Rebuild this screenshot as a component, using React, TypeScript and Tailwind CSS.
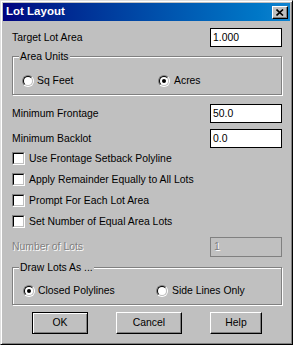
import type { ReactNode } from "react";

const face = "bg-[#c0c0c0]";

function Radio({ checked }: { checked?: boolean }) {
  return (
    <span className="flex size-[12px] shrink-0 items-center justify-center rounded-full border border-t-[#808080] border-l-[#808080] border-r-white border-b-white">
      <span className="flex size-[10px] items-center justify-center rounded-full border border-t-black border-l-black border-r-[#c0c0c0] border-b-[#c0c0c0] bg-white">
        {checked && <span className="size-[4px] rounded-full bg-black" />}
      </span>
    </span>
  );
}

function Check() {
  return (
    <span className="flex size-[13px] shrink-0 border border-t-[#808080] border-l-[#808080] border-r-white border-b-white">
      <span className="size-full border border-t-black border-l-black border-r-[#c0c0c0] border-b-[#c0c0c0] bg-white" />
    </span>
  );
}

function Field({ label, value, disabled }: { label: string; value: string; disabled?: boolean }) {
  return (
    <div className="flex h-[19px] items-center justify-between">
      <span className={disabled ? "text-[#808080] [text-shadow:1px_1px_0_#fff]" : ""}>{label}</span>
      <div
        className={
          disabled
            ? "flex h-[20px] w-[72px] items-center border border-[#808080] pl-[3px] text-[#808080] [text-shadow:1px_1px_0_#fff]"
            : "flex h-[19px] w-[72px] items-center border border-black bg-white pl-[2px]"
        }
      >
        {value}
      </div>
    </div>
  );
}

function Group({ title, className, children }: { title: string; className: string; children: ReactNode }) {
  return (
    <div className={`border border-[#808080] shadow-[1px_1px_0_#fff,inset_1px_1px_0_#fff] ${className}`}>
      <span className={`-mt-[7px] ml-[6px] block w-fit px-[1px] leading-[13px] ${face}`}>{title}</span>
      {children}
    </div>
  );
}

function CheckRow({ label }: { label: string }) {
  return (
    <div className="flex h-[21px] items-center gap-[4px]">
      <Check />
      <span>{label}</span>
    </div>
  );
}

function Button({ label, width, isDefault }: { label: string; width: string; isDefault?: boolean }) {
  return (
    <button
      className={
        isDefault
          ? `flex h-[22px] ${width} items-center justify-center border border-black shadow-[inset_1px_1px_0_#fff,inset_-1px_-1px_0_#808080] ${face}`
          : `flex h-[22px] ${width} items-center justify-center border border-t-white border-l-white border-r-black border-b-black shadow-[inset_-1px_-1px_0_#808080] ${face}`
      }
    >
      {label}
    </button>
  );
}

export default function App() {
  return (
    <div
      className={`h-[345px] w-[293px] border border-t-[#dfdfdf] border-l-[#dfdfdf] border-r-black border-b-black p-[2px] shadow-[inset_1px_1px_0_#fff,inset_-1px_-1px_0_#808080] font-['Liberation_Sans',Arial,sans-serif] text-[10.4px] text-black ${face}`}
    >
      <div className="flex h-[18px] items-center justify-between bg-gradient-to-r from-[#000080] to-[#1084d0] pl-[3px] pr-[2px]">
        <span className="text-[11.5px] font-bold text-white">Lot Layout</span>
        <span className="flex h-[13px] w-[16px] items-center justify-center border border-t-white border-l-white border-r-black border-b-black bg-[#c0c0c0] shadow-[inset_-1px_-1px_0_#808080]">
          <svg width="8" height="7" viewBox="0 0 8 7">
            <path d="M0.5 0.5 L7 6.5 M7 0.5 L0.5 6.5" stroke="black" strokeWidth="1.6" />
          </svg>
        </span>
      </div>

      <div className="flex flex-col pl-[9px] pr-[8px]">
        <div className="mt-[7px]">
          <Field label="Target Lot Area" value="1.000" />
        </div>

        <Group title="Area Units" className="mt-[9px] h-[39px]">
          <div className="mt-[9px] flex h-[18px] items-center pl-[9px]">
            <div className="flex w-[136px] items-center gap-[3px]">
              <Radio />
              <span>Sq Feet</span>
            </div>
            <div className="flex items-center gap-[4px]">
              <Radio checked />
              <span>Acres</span>
            </div>
          </div>
        </Group>

        <div className="mt-[9px]">
          <Field label="Minimum Frontage" value="50.0" />
        </div>
        <div className="mt-[6px]">
          <Field label="Minimum Backlot" value="0.0" />
        </div>

        <div className="flex flex-col">
          <CheckRow label="Use Frontage Setback Polyline" />
          <CheckRow label="Apply Remainder Equally to All Lots" />
          <CheckRow label="Prompt For Each Lot Area" />
          <CheckRow label="Set Number of Equal Area Lots" />
        </div>

        <div className="mt-[5px]">
          <Field label="Number of Lots" value="1" disabled />
        </div>

        <Group title="Draw Lots As ..." className="mt-[11px] h-[38px]">
          <div className="mt-[8px] flex h-[18px] items-center pl-[10px]">
            <div className="flex w-[133px] items-center gap-[3px]">
              <Radio checked />
              <span>Closed Polylines</span>
            </div>
            <div className="flex items-center gap-[4px]">
              <Radio />
              <span>Side Lines Only</span>
            </div>
          </div>
        </Group>

        <div className="mt-[7px] flex items-center gap-[28px] pl-[20px]">
          <Button label="OK" width="w-[56px]" isDefault />
          <Button label="Cancel" width="w-[66px]" />
          <Button label="Help" width="w-[52px]" />
        </div>
      </div>
    </div>
  );
}
